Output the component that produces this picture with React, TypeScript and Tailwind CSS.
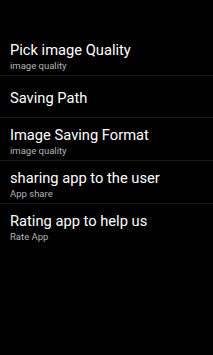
const items = [
  { title: "Pick image Quality", sub: "image quality" },
  { title: "Saving Path" },
  { title: "Image Saving Format", sub: "image quality" },
  { title: "sharing app to the user", sub: "App share" },
  { title: "Rating app to help us", sub: "Rate App" },
]

export default function App() {
  return (
    <main className="h-[355px] w-[213px] overflow-hidden bg-black font-['Roboto',sans-serif]">
      <ul className="pt-[33px]">
        {items.map((item, i) => (
          <li
            key={item.title}
            className={`flex flex-col px-[10px] ${i < items.length - 1 ? "border-b border-[#1a1a1a]" : ""} ${
              item.sub ? "h-[43px] pt-[8px]" : "h-[42px] pt-[13px]"
            }`}
          >
            <span className="text-[14.7px] leading-[18px] text-white">{item.title}</span>
            {item.sub && <span className="mt-[1px] text-[9.5px] leading-[11px] text-[#b5b5b5]">{item.sub}</span>}
          </li>
        ))}
      </ul>
    </main>
  )
}
